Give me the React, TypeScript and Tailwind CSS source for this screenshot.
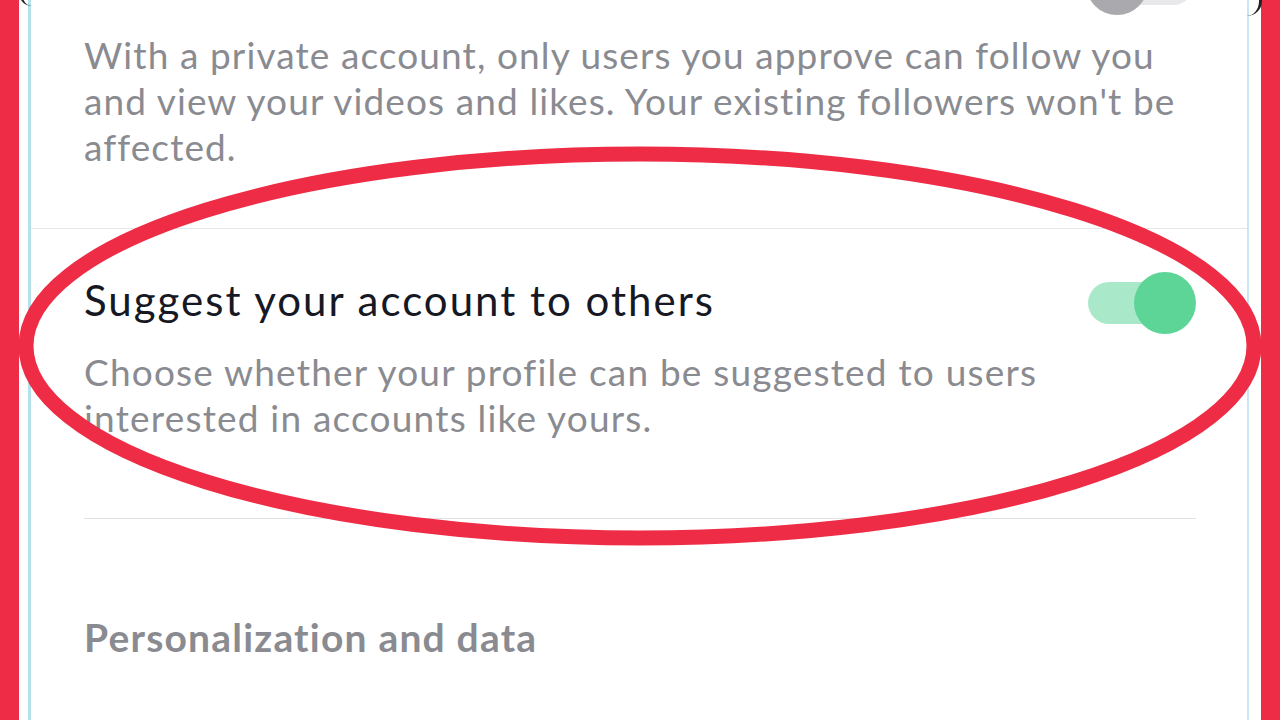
import React from "react";

function Toggle({ on }: { on: boolean }) {
  return (
    <div className="relative h-[62px] w-[110px] shrink-0">
      <div
        className={
          on
            ? "absolute left-[2px] right-[2px] top-[10px] h-[42px] rounded-full bg-[#a9e8c9]"
            : "absolute left-[2px] right-[2px] top-[10px] h-[42px] rounded-full bg-[#e8e8ea]"
        }
      />
      <div
        className={
          on
            ? "absolute right-0 top-0 h-[62px] w-[62px] rounded-full bg-[#5cd597]"
            : "absolute left-0 top-0 h-[62px] w-[62px] rounded-full bg-[#a9a9ae]"
        }
      />
    </div>
  );
}

export default function App() {
  const font = { fontFamily: "Lato, 'Noto Sans', sans-serif" };
  return (
    <div
      className="relative flex h-[720px] w-[1280px] overflow-hidden bg-white"
      style={font}
    >
      <div className="w-[19px] shrink-0 bg-[#ee2c46]" />
      <div className="w-[9px] shrink-0 bg-white" />
      <div className="w-[3px] shrink-0 bg-[#b3e2eb]" />
      <main className="flex min-w-0 flex-1 flex-col">
        {/* private account section */}
        <section className="relative pl-[53px] pr-[51px] pt-[32px] pb-[58px]">
          <div className="absolute right-[51px] top-[-47px]">
            <Toggle on={false} />
          </div>
          <p className="whitespace-nowrap text-[37px] leading-[46px] tracking-[1.1px] text-[#8a8b91]">
            <span className="block">With a private account, only users you approve can follow you</span>
            <span className="block">and view your videos and likes. Your existing followers won't be</span>
            <span className="block">affected.</span>
          </p>
        </section>
        <div className="h-px bg-[#e6e6e8]" />
        {/* suggest section */}
        <section className="pl-[53px] pr-[51px]">
          <div className="flex items-start justify-between pt-[43px]">
            <h2 className="mt-[5px] whitespace-nowrap text-[42px] leading-[46px] tracking-[2px] text-[#161823]">
              Suggest your account to others
            </h2>
            <Toggle on={true} />
          </div>
          <p className="mt-[15px] whitespace-nowrap text-[37px] leading-[46px] tracking-[1.2px] text-[#8a8b91]">
            <span className="block">Choose whether your profile can be suggested to users</span>
            <span className="block">interested in accounts like yours.</span>
          </p>
          <div className="mt-[77px] h-px bg-[#e3e3e5]" />
        </section>
        <section className="pl-[53px] pr-[51px] pt-[95px]">
          <h3 className="whitespace-nowrap text-[39px] font-bold leading-[46px] tracking-[1.2px] text-[#8a8b91]">
            Personalization and data
          </h3>
        </section>
      </main>
      <div className="w-[2px] shrink-0 bg-[#c6e8ee]" />
      <div className="w-[12px] shrink-0 bg-white" />
      <div className="w-[19px] shrink-0 bg-[#ee2c46]" />

      {/* phone corners */}
      <div className="absolute left-[19px] top-[-20px] h-[26px] w-[26px] rounded-full border-l-[3px] border-[#222]" />
      <div className="absolute right-[18px] top-[-14px] h-[30px] w-[30px] rounded-full border-r-[3px] border-[#222]" />

      {/* annotation ellipse */}
      <svg
        className="pointer-events-none absolute left-0 top-0"
        width="1280"
        height="720"
        viewBox="0 0 1280 720"
      >
        <ellipse cx="640" cy="346" rx="614" ry="192" fill="none" stroke="#ee2c46" strokeWidth="15" />
      </svg>
    </div>
  );
}
